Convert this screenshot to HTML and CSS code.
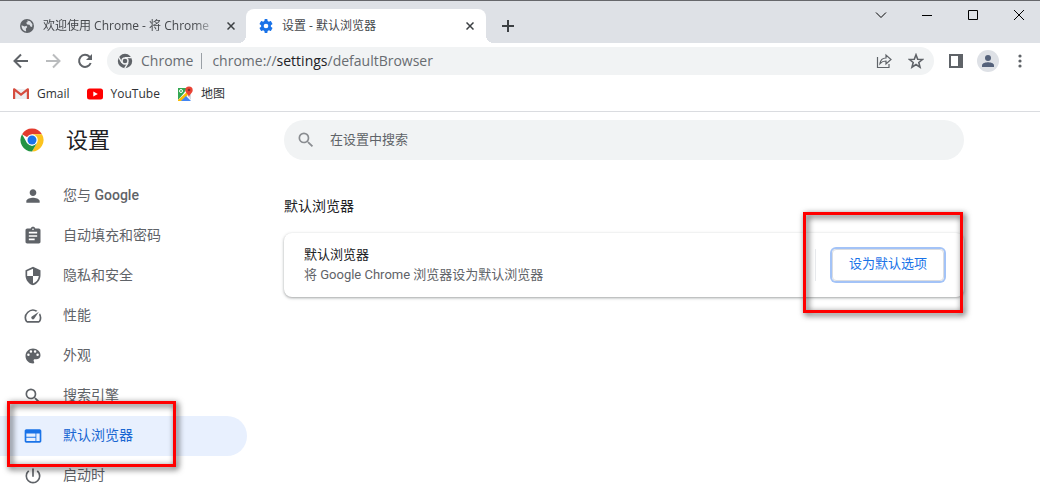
FILE: index.html
```html
<!DOCTYPE html>
<html lang="zh-CN">
<head>
<meta charset="utf-8">
<title>设置 - 默认浏览器</title>
<link rel="stylesheet" href="styles.css">
</head>
<body>
<header class="browser">
  <div class="tabstrip">
    <div class="tab">
      <svg class="tab-icon" viewBox="0 0 16 16"><circle cx="8" cy="8" r="7" fill="#5f6368"/><path d="M2.600 7.200l3 1.200 1.800-.6.9 1.300-1.500 1.700.4 2.500C4.600 13.200 2.300 10.500 2.600 7.200zM8.200 2.400l3 .9 2.200 3-.3 2.600-1.700-.4-.9-1.700-2.200-.4-1.200-1.600 1.600-.8z" fill="#dee1e6"/></svg>
      <span class="tab-title fading">欢迎使用 Chrome - 将 Chrome</span>
      <button class="tab-close" aria-label="关闭标签页"><svg viewBox="0 0 8 8"><path d="M.5.5l7 7M7.500.5l-7 7"/></svg></button>
    </div>
    <div class="tab active">
      <svg class="tab-icon" viewBox="0 0 24 24"><path fill="#1a73e8" d="M20.300 13.200c.1-.4.1-.8.1-1.200s0-.8-.1-1.200l2.500-2c.2-.2.3-.5.200-.8l-2.400-4.100c-.2-.3-.5-.4-.8-.3l-3 1.200c-.6-.5-1.300-.9-2-1.200L14.300.5c0-.3-.3-.5-.6-.5h-3.400c-.3 0-.6.200-.6.500l-.5 3.100c-.7.300-1.400.7-2 1.200l-3-1.200c-.3-.1-.6 0-.8.300L1 8c-.2.300-.1.600.2.800l2.500 2c-.1.400-.1.800-.1 1.200s0 .8.100 1.200l-2.500 2c-.3.200-.4.500-.2.800l2.400 4.100c.2.300.5.400.8.300l3-1.200c.6.500 1.300.9 2 1.200l.5 3.100c0 .3.300.5.600.5h3.400c.3 0 .6-.2.600-.5l.5-3.100c.7-.3 1.400-.7 2-1.200l3 1.200c.3.100.6 0 .8-.3L23 16c.2-.3.100-.6-.2-.8zM12 16a4 4 0 1 1 0-8 4 4 0 0 1 0 8z"/></svg>
      <span class="tab-title">设置 - 默认浏览器</span>
      <button class="tab-close" aria-label="关闭标签页"><svg viewBox="0 0 8 8"><path d="M.5.5l7 7M7.500.5l-7 7"/></svg></button>
    </div>
    <button class="new-tab" aria-label="新标签页"><svg viewBox="0 0 12 12"><path d="M6 0v12M0 6h12"/></svg></button>
    <div class="window-controls">
      <button aria-label="搜索标签页"><svg viewBox="0 0 10 10"><path d="M0 2.500l5 5 5-5"/></svg></button>
      <button aria-label="最小化"><svg viewBox="0 0 10 10"><path d="M0 5.500h10"/></svg></button>
      <button aria-label="最大化"><svg viewBox="0 0 10 10"><path d="M.5.5h9v9h-9z"/></svg></button>
      <button aria-label="关闭"><svg viewBox="0 0 10 10"><path d="M0 0l10 10M10 0L0 10"/></svg></button>
    </div>
  </div>
  <div class="toolbar">
    <div class="nav-buttons">
      <button aria-label="后退"><svg viewBox="0 0 16 16"><path d="M15 8H2M8 1.500L1.500 8 8 14.500"/></svg></button>
      <button class="disabled" aria-label="前进" disabled><svg viewBox="0 0 16 16"><path d="M1 8h13M8 1.500L14.500 8 8 14.500"/></svg></button>
      <button aria-label="重新加载"><svg viewBox="0 0 16 16"><path d="M13.700 10A6 6 0 1 1 12.500 3.800L14 5.500"/><path d="M15 1v6H9z" fill="#5f6368" stroke="none"/></svg></button>
    </div>
    <div class="omnibox">
      <svg class="site-icon" viewBox="0 0 16 16"><circle cx="8" cy="8" r="7.200" fill="#5f6368"/><circle cx="8" cy="8" r="3" fill="#5f6368" stroke="#f1f3f4" stroke-width="1.400"/><path d="M8 4.600h6.800M5 9.800L1.600 4M11 9.800l-3.300 5.600" stroke="#f1f3f4" stroke-width="1.300"/></svg>
      <span class="site-name">Chrome</span>
      <span class="url">chrome://<b>settings</b>/defaultBrowser</span>
      <button class="box-icon" aria-label="分享此页"><svg viewBox="0 0 16 16"><path d="M1.500 4v10.500h11.500V11M4 10.500C4.500 6.800 7 5 10 5V2l5 4.500-5 4.500V8C7.500 8 5.500 8.800 4 10.500z"/></svg></button>
      <button class="box-icon star" aria-label="收藏"><svg viewBox="0 0 16 16"><path d="M8 1.800l1.700 4.500 4.800.2-3.700 3 1.200 4.600L8 11.500l-4 2.600 1.200-4.600-3.700-3 4.800-.2z"/></svg></button>
    </div>
    <div class="toolbar-end">
      <button aria-label="侧边栏"><svg viewBox="0 0 14 14"><path fill="#5f6368" d="M0 0h14v14H0z"/><path fill="#fff" d="M2 2h7v10H2z"/></svg></button>
      <button class="avatar" aria-label="用户"><svg viewBox="0 0 14 14"><circle cx="7" cy="4" r="3"/><path d="M1 13v-1.500C1 9 5 8.300 7 8.300s6 .7 6 3.200V13z"/></svg></button>
      <button class="menu" aria-label="菜单"><svg viewBox="0 0 4 14"><circle cx="2" cy="2" r="1.600"/><circle cx="2" cy="7" r="1.600"/><circle cx="2" cy="12" r="1.600"/></svg></button>
    </div>
  </div>
  <nav class="bookmarks">
    <a href="#"><svg viewBox="0 0 16 16"><path fill="#eceff1" d="M1 3h14v10H1z"/><path fill="#d54c3f" d="M0 3.500C0 2.300 1.300 2 2 2.600l6 4.700 6-4.700c.7-.6 2-.3 2 .9V13h-2.200V5.600L8 10 2.200 5.600V13H0z"/></svg>Gmail</a>
    <a href="#"><svg viewBox="0 0 16 16"><rect y="2.500" width="16" height="11" rx="2.500" fill="#f00"/><path fill="#fff" d="M6.300 5.500v5L10.800 8z"/></svg>YouTube</a>
    <a href="#"><svg viewBox="0 0 16 16"><path fill="#34a853" d="M1 2h9l-3 5-6 7z"/><path fill="#fbbc04" d="M1 14L11 5l2 2-8 8H1z"/><path fill="#4285f4" d="M4 15l5-5 5 5z"/><path fill="#d7dbe0" d="M10 9l4-3v8z"/><circle cx="4" cy="5" r="1.500" fill="none" stroke="#fff"/><path fill="#ea4335" d="M12 .5a3.700 3.700 0 0 0-3.700 3.700c0 2.500 3 3.800 3.700 6.800.7-3 3.700-4.300 3.700-6.800A3.700 3.700 0 0 0 12 .5z"/><circle cx="12" cy="4" r="1.300" fill="#8c2f24"/></svg>地图</a>
  </nav>
</header>
<div class="settings">
  <aside class="sidebar">
    <div class="brand">
      <svg viewBox="0 0 48 48"><circle cx="24" cy="24" r="23" fill="#fff"/><path fill="#e33b2e" d="M24 24L4.080 12.500A23 23 0 0 1 43.920 12.500H24z"/><path fill="#fcc31e" d="M24 12.500h19.920A23 23 0 0 1 24 47l10-17.250z"/><path fill="#229342" d="M24 47A23 23 0 0 1 4.080 12.500L14 29.750 24 35.500l10-5.750z"/><circle cx="24" cy="24" r="11.500" fill="#fff"/><circle cx="24" cy="24" r="9" fill="#1a73e8"/></svg>
      <h1>设置</h1>
    </div>
    <nav class="menu-list">
      <a href="#"><svg viewBox="0 0 24 24"><path d="M12 12c2.210 0 4-1.790 4-4s-1.790-4-4-4-4 1.790-4 4 1.790 4 4 4zm0 2c-2.670 0-8 1.340-8 4v2h16v-2c0-2.660-5.330-4-8-4z"/></svg><span>您与 <b>Google</b></span></a>
      <a href="#"><svg viewBox="0 0 24 24"><path d="M19 3h-4.180C14.400 1.840 13.300 1 12 1c-1.300 0-2.400.84-2.820 2H5c-1.100 0-2 .9-2 2v14c0 1.100.9 2 2 2h14c1.100 0 2-.9 2-2V5c0-1.100-.9-2-2-2zm-7 0c.55 0 1 .45 1 1s-.45 1-1 1-1-.45-1-1 .45-1 1-1zm2 14H7v-2h7v2zm3-4H7v-2h10v2zm0-4H7V7h10v2z"/></svg><span>自动填充和密码</span></a>
      <a href="#"><svg viewBox="0 0 24 24"><path d="M12 1L3 5v6c0 5.550 3.840 10.740 9 12 5.160-1.260 9-6.450 9-12V5l-9-4zm0 10.990h7c-.53 4.120-3.280 7.790-7 8.940V12H5V6.300l7-3.110v8.800z"/></svg><span>隐私和安全</span></a>
      <a href="#"><svg viewBox="0 0 24 24"><path d="M20.380 8.570l-1.230 1.850a8 8 0 0 1-.22 7.580H5.070A8 8 0 0 1 15.580 6.850l1.850-1.230A10 10 0 0 0 3.350 19a2 2 0 0 0 1.720 1h13.850a2 2 0 0 0 1.740-1 10 10 0 0 0-.27-10.440zm-9.790 6.840a2 2 0 0 0 2.830 0l5.660-8.490-8.490 5.660a2 2 0 0 0 0 2.830z"/></svg><span>性能</span></a>
      <a href="#"><svg viewBox="0 0 24 24"><path d="M12 3c-5 0-9 4-9 9s4 9 9 9c.8 0 1.500-.7 1.500-1.500 0-.4-.2-.7-.4-1-.2-.3-.4-.6-.4-1 0-.8.700-1.500 1.500-1.500H16c2.800 0 5-2.200 5-5 0-4.400-4-8-9-8zm-5.500 9a1.500 1.500 0 1 1 0-3 1.500 1.500 0 0 1 0 3zm3-4a1.500 1.500 0 1 1 0-3 1.500 1.500 0 0 1 0 3zm5 0a1.500 1.500 0 1 1 0-3 1.500 1.500 0 0 1 0 3zm3 4a1.500 1.500 0 1 1 0-3 1.500 1.500 0 0 1 0 3z"/></svg><span>外观</span></a>
      <a href="#"><svg viewBox="0 0 24 24"><path d="M15.500 14h-.79l-.28-.27A6.470 6.470 0 0 0 16 9.500 6.500 6.500 0 1 0 9.500 16c1.610 0 3.090-.59 4.230-1.570l.27.28v.79l5 4.990L20.490 19l-4.990-5zm-6 0C7.010 14 5 11.990 5 9.500S7.010 5 9.500 5 14 7.010 14 9.500 11.990 14 9.500 14z"/></svg><span>搜索引擎</span></a>
      <a href="#" class="selected" aria-current="page"><svg viewBox="0 0 24 24"><path d="M20 4H4c-1.100 0-2 .9-2 2v12c0 1.100.9 2 2 2h16c1.100 0 2-.9 2-2V6c0-1.100-.9-2-2-2zm-5 14H4v-4h11v4zm0-5H4V9h11v4zm5 5h-4V9h4v9z"/></svg><span>默认浏览器</span><i class="callout callout-nav"></i></a>
      <a href="#"><svg viewBox="0 0 24 24"><path d="M13 3h-2v10h2V3zm4.830 2.170l-1.420 1.420A6.920 6.920 0 0 1 19 12a7 7 0 1 1-11.420-5.420L6.170 5.170A8.930 8.930 0 0 0 3 12a9 9 0 0 0 18 0c0-2.740-1.230-5.180-3.170-6.830z"/></svg><span>启动时</span></a>
    </nav>
  </aside>
  <main class="content">
    <label class="search">
      <svg viewBox="0 0 24 24"><path d="M15.500 14h-.79l-.28-.27A6.470 6.470 0 0 0 16 9.500 6.500 6.500 0 1 0 9.500 16c1.610 0 3.090-.59 4.230-1.570l.27.28v.79l5 4.990L20.490 19l-4.990-5zm-6 0C7.010 14 5 11.990 5 9.500S7.010 5 9.500 5 14 7.010 14 9.500 11.990 14 9.500 14z"/></svg>
      <input type="text" placeholder="在设置中搜索" aria-label="在设置中搜索">
    </label>
    <h2>默认浏览器</h2>
    <section class="card">
      <div class="card-text">
        <div>默认浏览器</div>
        <div class="secondary">将 Google Chrome 浏览器设为默认浏览器</div>
      </div>
      <div class="card-action">
        <button class="set-default">设为默认选项</button>
      </div>
      <i class="callout callout-card"></i>
    </section>
  </main>
</div>
</body>
</html>
```
FILE: styles.css
```css
* { box-sizing: border-box; }
body {
  margin: 0;
  background: #fff;
  color: #202124;
  font: 13px/20px Roboto, "Noto Sans CJK SC", sans-serif;
}
button {
  display: flex;
  align-items: center;
  justify-content: center;
  padding: 0;
  border: 0;
  background: none;
}
a { color: inherit; text-decoration: none; }
svg { display: block; flex: none; }

/* Browser frame */
.browser {
  border-bottom: 1px solid #dadce0;
  font-family: "Open Sans", "Noto Sans CJK SC", sans-serif;
}
.tabstrip {
  display: flex;
  height: 43px;
  padding: 8px 16px 0 8px;
  border-top: 1px solid #66676b;
  background: #dee1e6;
}
.tab {
  display: flex;
  align-items: center;
  width: 238px;
  padding: 0 10px 0 11px;
  font-size: 12px;
  color: #45484c;
}
.tab.active {
  position: relative;
  width: 240px;
  padding: 0 11px 0 12px;
  border-radius: 8px 8px 0 0;
  background: #fff;
}
.tab.active::before,
.tab.active::after {
  content: "";
  position: absolute;
  bottom: 0;
  width: 8px;
  height: 8px;
}
.tab.active::before {
  right: 100%;
  background: radial-gradient(circle at 0 0, #dee1e6 8px, #fff 8px);
}
.tab.active::after {
  left: 100%;
  background: radial-gradient(circle at 100% 0, #dee1e6 8px, #fff 8px);
}
.tab-icon { width: 16px; height: 16px; margin-right: 8px; }
.active .tab-icon { width: 14px; height: 14px; margin: 0 9px 0 1px; }
.tab-title { flex: 1; white-space: nowrap; }
.fading {
  -webkit-mask-image: linear-gradient(to left, transparent, #000 24px);
  mask-image: linear-gradient(to left, transparent, #000 24px);
}
.tab-close { width: 10px; height: 16px; margin-left: 8px; }
.tab-close svg { width: 8px; height: 8px; }
.tabstrip button svg { fill: none; stroke: #3c4043; stroke-width: 1.5; }
.new-tab { width: 28px; margin-left: 8px; }
.new-tab svg { width: 12px; height: 12px; }
.tabstrip .new-tab svg { stroke-width: 2; }
.window-controls { display: flex; gap: 36px; height: 12px; margin-left: auto; }
.window-controls svg { width: 10px; height: 10px; overflow: visible; }
.tabstrip .window-controls svg { stroke: #000; stroke-width: 1; }

.toolbar { display: flex; align-items: center; height: 36px; padding-right: 14px; }
.nav-buttons { display: flex; gap: 16px; padding: 0 14px 0 13px; }
.nav-buttons svg { width: 16px; height: 16px; fill: none; stroke: #5f6368; stroke-width: 2; }
.nav-buttons .disabled svg { stroke: #babcbe; }
.omnibox {
  display: flex;
  flex: 1;
  align-items: center;
  height: 28px;
  padding: 0 10px;
  border-radius: 14px;
  background: #f1f3f4;
  color: #686c71;
  font-size: 14px;
}
.site-icon { width: 16px; height: 16px; margin-right: 8px; fill: none; }
.site-name {
  padding-right: 8px;
  border-right: 1px solid #9aa0a6;
  line-height: 16px;
}
.url { flex: 1; padding-left: 10px; }
.url b { color: #202124; font-weight: 400; }
.box-icon { margin-left: 16px; }
.box-icon svg { width: 16px; height: 16px; fill: none; stroke: #5f6368; stroke-width: 1.2; }
.star svg { stroke-width: 1.6; }
.toolbar-end { display: flex; align-items: center; gap: 14px; padding-left: 15px; }
.toolbar-end svg { height: 14px; }
.avatar {
  width: 22px;
  height: 22px;
  border-radius: 50%;
  background: #dee1e6;
}
.avatar svg { fill: #54617a; }
.menu { width: 12px; }
.menu svg { fill: #5f6368; }
.toolbar-end .menu { margin-left: 1px; }

.bookmarks {
  display: flex;
  gap: 17px;
  height: 32px;
  padding: 0 13px 3px;
  color: #303236;
  font-size: 12px;
}
.bookmarks a { display: flex; align-items: center; gap: 8px; }
.bookmarks svg { width: 16px; height: 16px; }

/* Settings page */
.settings { display: flex; }
.sidebar { flex: none; width: 284px; }
.brand { display: flex; align-items: center; height: 56px; padding-left: 20px; gap: 22px; }
.brand svg { width: 24px; height: 24px; }
h1 { margin: 0; padding-top: 2px; font-size: 22px; line-height: 32px; font-weight: 400; }
.menu-list { width: 247px; padding-top: 8px; color: #5f6368; font-size: 14px; }
.menu-list a {
  position: relative;
  display: flex;
  align-items: center;
  gap: 20px;
  height: 40px;
  padding-left: 23px;
  border-radius: 0 20px 20px 0;
}
.menu-list svg { width: 20px; height: 20px; fill: currentColor; }
.menu-list span { padding-bottom: 2px; }
.menu-list b { font-weight: 500; }
.menu-list a.selected { background: #e8f0fe; color: #1967d2; }
.selected svg { fill: #1a73e8; }

.content { flex: 1; max-width: 680px; padding-top: 8px; }
.search {
  display: flex;
  align-items: center;
  gap: 14px;
  height: 40px;
  padding: 0 20px 0 12px;
  border-radius: 20px;
  background: #f1f3f4;
}
.search svg { width: 20px; height: 20px; fill: #8a8d91; }
.search input {
  flex: 1;
  padding: 0;
  border: 0;
  outline: 0;
  background: none;
  font: inherit;
}
.search input::placeholder { color: #5f6368; }
h2 { margin: 36px 0 17px; font-size: 14px; line-height: 20px; font-weight: 400; }
.card {
  position: relative;
  display: flex;
  align-items: center;
  height: 64px;
  padding: 0 20px;
  border-radius: 8px;
  background: #fff;
  box-shadow: 0 1px 2px rgba(60, 64, 67, .3), 0 1px 3px 1px rgba(60, 64, 67, .15);
}
.card-text { flex: 1; }
.secondary { color: #5f6368; }
.card-action { padding-left: 16px; border-left: 1px solid #e8eaed; }
.set-default {
  height: 32px;
  padding: 0 16px 2px;
  border: 1px solid #dadce0;
  border-radius: 4px;
  box-shadow: 0 0 0 2px #a3c3f7;
  color: #1a73e8;
  font: inherit;
}

/* Red highlight frames laid over the page */
.callout {
  position: absolute;
  z-index: 1;
  border: 3px solid #f00;
  filter: drop-shadow(2px 2px 3px rgba(0, 0, 0, .8));
  pointer-events: none;
}
.callout-nav { top: -15px; left: 7px; width: 169px; height: 66px; }
.callout-card { top: -21px; right: 1px; width: 160px; height: 101px; }
```
